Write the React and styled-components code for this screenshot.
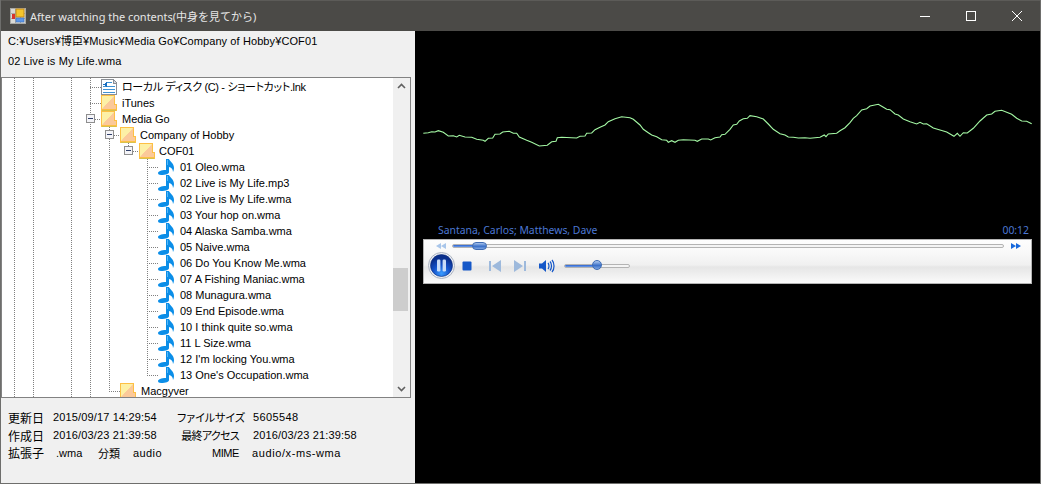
import React from "react";
import styled, { createGlobalStyle } from "styled-components";

const Global = createGlobalStyle`
  html, body { margin: 0; padding: 0; background: #000; }
  * { box-sizing: border-box; }
`;

const uiFont = `"Liberation Sans", "Noto Sans CJK JP", sans-serif`;
const segoe = `"Noto Sans", "Noto Sans CJK JP", sans-serif`;

const Window = styled.div`
  width: 1041px; height: 484px; display: flex; flex-direction: column;
  border: 1px solid #6e6e6c; border-top: 0; background: #000; overflow: hidden;
`;
const TitleBar = styled.header`
  height: 31px; flex: none; margin: 0 -1px; background: #4b4a47; border-top: 1px solid #5c5b58;
  display: flex; align-items: center; padding: 0 1px 0 10px; color: #e6e6e6;
  font: 11px ${segoe};
`;
const TitleText = styled.span` margin-left: 4px; flex: 1; letter-spacing: -0.02px; `;
const WinButton = styled.button`
  width: 46px; height: 30px; border: 0; background: none; padding: 0; display: flex;
  align-items: center; justify-content: center;
`;
const Body = styled.div` flex: 1; display: flex; min-height: 0; `;
const Left = styled.aside`
  width: 414px; flex: none; background: #f0f0f0; display: flex; flex-direction: column;
  font: 11px ${uiFont}; color: #000; font-feature-settings: "palt";
`;
const PathLine = styled.div`
  height: 20px; line-height: 20px; padding-left: 7px; white-space: nowrap; letter-spacing: 0.1px;
`;
const PathBlock = styled.div` height: 46px; display: flex; flex-direction: column; `;
const TreeBox = styled.div`
  width: 410px; height: 321px; position: relative; overflow: hidden;
  border: 1px solid #828282; background: #fff; padding-top: 1px;
`;
const Guides = styled.svg` position: absolute; left: 0; top: 0; `;
const Row = styled.div`
  height: 16px; display: flex; align-items: center; position: relative; white-space: nowrap;
  padding-left: ${p => p.$x}px;
`;
const RowLabel = styled.span`
  margin-left: ${p => p.$gap}px; line-height: 16px; letter-spacing: ${p => p.$ls || 0}px;
`;
const Expander = styled.span`
  position: absolute; left: ${p => p.$x}px; top: 3px; width: 9px; height: 9px; background: #f4f4f8;
  border: 1px solid #8e8e8e; display: flex; align-items: center; justify-content: center;
  &::after { content: ""; width: 5px; height: 1px; background: #30406a; }
`;
const ScrollBar = styled.div`
  position: absolute; right: 0; top: 0; bottom: 0; width: 17px; background: #f0f0f0;
  display: flex; flex-direction: column; justify-content: space-between; align-items: flex-start;
  padding: 5px 0;
`;
const ScrollThumb = styled.div`
  position: absolute; left: 0; top: 190px; width: 15px; height: 43px; background: #cdcdcd;
`;
const Arrow = styled.svg` margin-left: 4px; `;
const Info = styled.div` padding-top: 10px; display: flex; flex-direction: column; `;
const InfoRow = styled.div` display: flex; align-items: center; height: ${p => p.$h}px; white-space: nowrap; padding-left: 7px; `;
const Cell = styled.span`
  width: ${p => p.$w}px; flex: none; text-align: ${p => p.$right ? "right" : "left"};
  font-size: ${p => p.$size || 12}px; letter-spacing: ${p => p.$ls || 0}px;
`;
const Right = styled.main` flex: 1; background: #000; display: flex; flex-direction: column; padding-left: 8px; `;
const Wave = styled.svg` display: block; flex: none; `;
const Caption = styled.div`
  width: 609px; height: 17px; display: flex; justify-content: space-between; align-items: center;
  padding: 0 3px 2px 15px; color: #4c78d4; font: 10.4px ${segoe};
`;
const Player = styled.div`
  width: 609px; height: 45px; border: 1px solid #b4b4b4; display: flex; flex-direction: column;
  background: linear-gradient(#fdfdfd 0, #f9f9f9 12px, #f0f0f0 25px, #e6e6e6 27px, #ededed 33px, #fbfbfb 43px);
`;
const SeekRow = styled.div` height: 12px; display: flex; align-items: center; padding: 0 12px; `;
const Track = styled.div`
  position: relative; width: ${p => p.$w}px; height: 4px; border: 1px solid #b3b3b3; border-radius: 2px;
  background: #f4f4f4; flex: none; margin: ${p => p.$m || "0"};
`;
const Fill = styled.div`
  position: absolute; left: 0; top: 0; bottom: 0; width: ${p => p.$w}px; border-radius: 2px;
  background: linear-gradient(#2c62cf, #6f9ee8);
`;
const SeekThumb = styled.div`
  position: absolute; left: ${p => p.$x}px; top: -3px; width: 15px; height: 8px; border-radius: 4px;
  border: 1px solid #3f6cb4; background: linear-gradient(#a9c4ec, #3a70c8 55%, #7fa6e2);
`;
const VolThumb = styled.div`
  position: absolute; left: ${p => p.$x}px; top: -5px; width: 10px; height: 10px; border-radius: 50%;
  border: 1px solid #3f6cb4; background: linear-gradient(#b5cdf0, #3a70c8 55%, #7fa6e2);
`;
const ControlRow = styled.div` flex: 1; display: flex; align-items: center; padding-left: 4px; padding-bottom: 4px; `;
const Ctrl = styled.svg` flex: none; margin-left: ${p => p.$ml || 0}px; display: block; `;

const AppIcon = () => (
  <svg width="16" height="16" viewBox="0 0 16 16">
    <rect x="0.5" y="0.5" width="15" height="15" fill="#d9d9d5" stroke="#a9a9a5" />
    <path d="M1 5.5H15M1 10.5H15M5.5 1V15M10.5 5V15" stroke="#a9a9a5" />
    <rect x="6" y="1" width="8" height="8" fill="#f5c52c" stroke="#c48a18" />
    <rect x="2" y="6" width="3" height="5" fill="#d8342c" />
    <rect x="6" y="10" width="8" height="4" fill="#5c96e8" stroke="#3f6fb8" strokeWidth="0.6" />
  </svg>
);

const Folder = () => (
  <svg width="16" height="16" viewBox="0 0 16 16" style={{ flex: "none" }} shapeRendering="crispEdges">
    <defs>
      <linearGradient id="fld" x1="0" y1="0" x2="1" y2="1">
        <stop offset="0.49" stopColor="#fdf0a6" />
        <stop offset="0.51" stopColor="#fbc99a" />
      </linearGradient>
    </defs>
    <path d="M0 0H14V9H16V16H0Z" fill="#fdc044" />
    <rect x="1" y="1" width="12" height="13" fill="url(#fld)" />
    <path d="M13 10H15V14H13Z" fill="#fbc99a" />
    <path d="M1 15H15" stroke="#d6c24e" strokeWidth="1" />
  </svg>
);

const Note = () => (
  <svg width="16" height="16" viewBox="0 0 16 16" style={{ flex: "none" }}>
    <path d="M8 0H11C11.5 2 16 4 16 9C16 10.5 15.5 12 15 13C15 10 13 8.5 11 8V13C11 15 8 16 3 16C1 16 0 15 0 14C0 12.5 3 11 8 11Z" fill="#0b8ee8" />
    <path d="M9 1H10V6H9Z" fill="#57b8f6" />
  </svg>
);

const Shortcut = () => (
  <svg width="16" height="16" viewBox="0 0 16 16" style={{ flex: "none" }} shapeRendering="crispEdges">
    <path d="M.5.5H12L15.5 4V15.5H.5Z" fill="#fff" stroke="#8a8f96" />
    <path d="M12 1V4H15" fill="#d6dae0" stroke="#8a8f96" />
    <path d="M6 3.5H11M2 7.5H14M2 10.5H14M2 13.5H14" stroke="#3f93d4" strokeWidth="1" />
    <path d="M6 3L2 5.5 6 8Z" fill="#1a6fc0" />
  </svg>
);

const tracks = [
  "01 Oleo.wma", "02 Live is My Life.mp3", "02 Live is My Life.wma", "03 Your hop on.wma",
  "04 Alaska Samba.wma", "05 Naive.wma", "06 Do You Know Me.wma", "07 A Fishing Maniac.wma",
  "08 Munagura.wma", "09 End Episode.wma", "10 I think quite so.wma", "11 L Size.wma",
  "12 I'm locking You.wma", "13 One's Occupation.wma",
];

const rows = [
  { x: 99, icon: "lnk", label: "ローカル ディスク (C) - ショートカット.lnk", gap: 5, ls: -0.35 },
  { x: 99, icon: "folder", label: "iTunes", gap: 5 },
  { x: 99, icon: "folder", label: "Media Go", gap: 5, exp: 84 },
  { x: 118, icon: "folder", label: "Company of Hobby", gap: 4, exp: 103 },
  { x: 137, icon: "folder", label: "COF01", gap: 4, exp: 122 },
  ...tracks.map(label => ({ x: 156, icon: "note", label, gap: 6 })),
  { x: 118, icon: "folder", label: "Macgyver", gap: 5 },
];

const icons = { lnk: <Shortcut />, folder: <Folder />, note: <Note /> };

const TreeGuides = () => {
  const rowY = i => 9 + 16 * i;
  const h = [
    [88, 99, 0], [88, 99, 1], [93, 99, 2], [112, 118, 3], [131, 137, 4], [107, 118, 19],
    ...tracks.map((_, i) => [145, 156, 5 + i]),
  ];
  const v = [
    [12, 0, 320], [31, 0, 320], [69, 0, 320], [88, 0, 320],
    [107, 49, 313], [126, 65, 70], [145, 81, 297],
  ];
  return (
    <Guides width="391" height="320" viewBox="0 0 391 320" shapeRendering="crispEdges">
      <g stroke="#808080" strokeWidth="1" strokeDasharray="1 1" fill="none">
        {v.map(([x, a, b], i) => <path key={i} d={`M${x + 0.5} ${a}V${b}`} />)}
        {h.map(([a, b, r], i) => <path key={i} d={`M${a} ${rowY(r) + 0.5}H${b}`} />)}
      </g>
    </Guides>
  );
};

const w1 = [[10,115],[25,113],[35,110],[45,111],[55,107],[70,112],[85,123],[100,122],[110,126],[118,121],[135,126],[155,127],[170,133],[190,136],[195,139],[205,130],[218,129],[225,118],[240,117],[248,111],[268,109],[280,115],[290,115],[298,126],[320,136],[335,142],[358,153],[382,151],[395,140],[408,139],[412,128],[425,127],[470,129],[480,124],[495,123],[500,115],[515,114],[525,104],[540,97],[555,90],[565,80],[585,71],[605,65],[630,68],[640,73],[660,90],[670,103],[685,113],[695,120],[710,125],[725,134],[740,136],[745,142],[755,137],[765,142],[775,136],[790,134],[825,136],[832,139],[845,132],[865,132],[872,135],[885,128],[900,126],[905,119],[915,118],[930,103]];
const w2 = [[10,90],[20,88],[28,78],[40,71],[52,70],[60,62],[80,65],[100,72],[115,87],[130,103],[150,116],[165,120],[175,126],[190,127],[205,129],[225,128],[240,130],[270,127],[283,120],[288,125],[295,117],[320,115],[330,107],[345,98],[360,83],[370,70],[380,62],[395,45],[410,41],[420,33],[445,28],[455,34],[470,43],[480,44],[495,57],[505,60],[520,72],[540,80],[560,87],[570,82],[580,87],[590,86],[610,99],[630,105],[650,111],[672,124],[682,115],[690,124],[700,113],[712,114],[730,100],[750,78],[770,60],[785,57],[795,49],[815,46],[830,52],[845,58],[860,70],[875,78],[890,79],[905,86]];
const wavePoints = [
  ...w1.map(([x, y]) => [420 + x / 3, 95 + y / 3]),
  ...w2.map(([x, y]) => [730 + x / 3, 95 + y / 3]),
].map(([x, y]) => `${(x - 423).toFixed(1)},${(y - 31).toFixed(1)}`).join(" ");

export default function App() {
  return (
    <>
      <Global />
      <Window>
        <TitleBar>
          <AppIcon />
          <TitleText>After watching the contents(中身を見てから)</TitleText>
          <WinButton aria-label="minimize">
            <svg width="10" height="10"><path d="M0 5.5H10" stroke="#fff" /></svg>
          </WinButton>
          <WinButton aria-label="maximize">
            <svg width="10" height="10"><rect x=".5" y=".5" width="9" height="9" fill="none" stroke="#fff" /></svg>
          </WinButton>
          <WinButton aria-label="close">
            <svg width="10" height="10"><path d="M0 0L10 10M10 0L0 10" stroke="#fff" /></svg>
          </WinButton>
        </TitleBar>
        <Body>
          <Left>
            <PathBlock>
              <PathLine>C:¥Users¥博臣¥Music¥Media Go¥Company of Hobby¥COF01</PathLine>
              <PathLine>02 Live is My Life.wma</PathLine>
            </PathBlock>
            <TreeBox>
              <TreeGuides />
              {rows.map((r, i) => (
                <Row key={i} $x={r.x}>
                  {r.exp != null && <Expander $x={r.exp} />}
                  {icons[r.icon]}
                  <RowLabel $gap={r.gap} $ls={r.ls}>{r.label}</RowLabel>
                </Row>
              ))}
              <ScrollBar>
                <Arrow width="9" height="6" viewBox="0 0 9 6"><path d="M1 5L4.5 1.5 8 5" fill="none" stroke="#606060" strokeWidth="1.6" /></Arrow>
                <ScrollThumb />
                <Arrow width="9" height="6" viewBox="0 0 9 6"><path d="M1 1L4.5 4.5 8 1" fill="none" stroke="#606060" strokeWidth="1.6" /></Arrow>
              </ScrollBar>
            </TreeBox>
            <Info>
              <InfoRow $h={18}>
                <Cell $w={45}>更新日</Cell>
                <Cell $w={124} $size={11} $ls={0.15}>2015/09/17 14:29:54</Cell>
                <Cell $w={62} $right $size={11}>ファイルサイズ</Cell>
                <Cell $w={14} />
                <Cell $w={60} $size={11} $ls={0.4}>5605548</Cell>
              </InfoRow>
              <InfoRow $h={18}>
                <Cell $w={45}>作成日</Cell>
                <Cell $w={124} $size={11} $ls={0.15}>2016/03/23 21:39:58</Cell>
                <Cell $w={62} $right $size={11} $ls={-0.7}>最終アクセス</Cell>
                <Cell $w={14} />
                <Cell $w={120} $size={11} $ls={0.15}>2016/03/23 21:39:58</Cell>
              </InfoRow>
              <InfoRow $h={17}>
                <Cell $w={48}>拡張子</Cell>
                <Cell $w={42} $size={11}>.wma</Cell>
                <Cell $w={35} $size={11}>分類</Cell>
                <Cell $w={44} $size={11} $ls={0.4}>audio</Cell>
                <Cell $w={62} $right $size={11} $ls={-0.4}>MIME</Cell>
                <Cell $w={13} />
                <Cell $w={120} $size={11} $ls={0.6}>audio/x-ms-wma</Cell>
              </InfoRow>
            </Info>
          </Left>
          <Right>
            <Wave width="609" height="191" viewBox="0 0 609 191">
              <polyline points={wavePoints} fill="none" stroke="#a4f8a4" strokeWidth="1.1" />
            </Wave>
            <Caption>
              <span>Santana, Carlos; Matthews, Dave</span>
              <span>00:12</span>
            </Caption>
            <Player>
              <SeekRow>
                <svg width="10" height="6" viewBox="0 0 10 6" style={{ flex: "none" }}><path d="M5 0V6L0 3ZM10 0V6L5 3Z" fill="#a9c6ea" /></svg>
                <Track $w={552} $m="0 7px 0 6px">
                  <Fill $w={26} />
                  <SeekThumb $x={19} />
                </Track>
                <svg width="10" height="6" viewBox="0 0 10 6" style={{ flex: "none" }}><path d="M0 0V6L5 3ZM5 0V6L10 3Z" fill="#1668dc" /></svg>
              </SeekRow>
              <ControlRow>
                <Ctrl width="27" height="27" viewBox="0 0 27 27">
                  <defs>
                    <radialGradient id="pb" cx="50%" cy="85%" r="70%">
                      <stop offset="0" stopColor="#3a9cff" />
                      <stop offset="0.55" stopColor="#1350c8" />
                      <stop offset="1" stopColor="#0a2f8c" />
                    </radialGradient>
                  </defs>
                  <circle cx="13.5" cy="13.5" r="13" fill="#eef0f4" stroke="#aab2c0" />
                  <circle cx="13.5" cy="13.5" r="11" fill="url(#pb)" stroke="#0a2a78" strokeWidth="0.6" />
                  <rect x="9" y="7.5" width="3.4" height="12" rx="1.2" fill="#c9dcf8" />
                  <rect x="14.6" y="7.5" width="3.4" height="12" rx="1.2" fill="#c9dcf8" />
                </Ctrl>
                <Ctrl $ml={7} width="10" height="10" viewBox="0 0 10 10"><rect width="9" height="9" x=".5" y=".5" rx="1" fill="#1457c8" /></Ctrl>
                <Ctrl $ml={17} width="12" height="12" viewBox="0 0 12 12"><path d="M0 1H2V11H0ZM12 0V12L3 6Z" fill="#9db9dc" /></Ctrl>
                <Ctrl $ml={13} width="12" height="12" viewBox="0 0 12 12"><path d="M12 1H10V11H12ZM0 0V12L9 6Z" fill="#9db9dc" /></Ctrl>
                <Ctrl $ml={13} width="16" height="14" viewBox="0 0 16 14">
                  <path d="M0 4.5H3L7 1V13L3 9.5H0Z" fill="#1457c8" />
                  <path d="M9 4C10.3 5.5 10.3 8.5 9 10M11 2.5C13 4.8 13 9.2 11 11.5M13 1C15.7 4 15.7 10 13 13" fill="none" stroke="#1457c8" strokeWidth="1.2" />
                </Ctrl>
                <Track $w={66} $m="0 0 0 9px">
                  <Fill $w={32} />
                  <VolThumb $x={27} />
                </Track>
              </ControlRow>
            </Player>
          </Right>
        </Body>
      </Window>
    </>
  );
}
